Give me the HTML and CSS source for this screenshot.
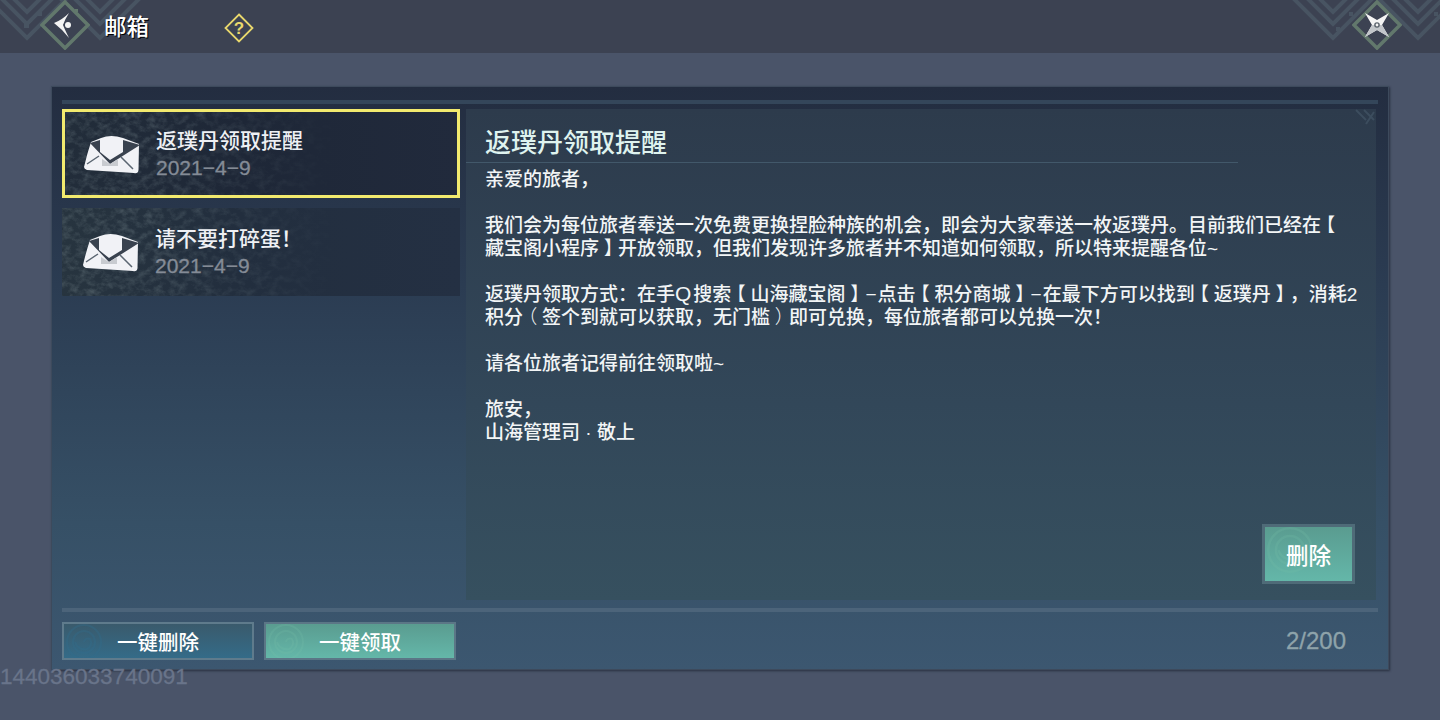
FILE: index.html
```html
<!DOCTYPE html>
<html lang="zh-CN">
	<head>
		<meta charset="utf-8" />
		<title>邮箱</title>
		<link rel="stylesheet" href="styles.css">
	</head>

	<body>
		<svg class="defs" width="0" height="0">
			<filter id="grain" x="0" y="0" width="100%" height="100%">
				<feTurbulence type="fractalNoise" baseFrequency="0.12 0.16" numOctaves="5" seed="7"/>
				<feColorMatrix values="0 0 0 0 0.55  0 0 0 0 0.68  0 0 0 0 0.68  2 0 0 0 -0.8"/>
			</filter>
			<g id="env">
				<path d="M1 33 Q4 20 8 8 L18 4 Q28 0 40 4 L56 10 L55.500 36 Q55 40 51 39 L4 36 Q1 35 1 33 Z" fill="#f1f2f6"/>
				<path d="M7 9 L17 6 L17 18 L27 26 L40 18 L40 6 L57 11 L27 30 Z" fill="#39424f"/>
				<path d="M19 25 L27 30 L35 25 L35 32 L19 32 Z" fill="#c8cbd0"/>
				<path d="M4 30 L16 22 M50 35 L38 23" stroke="#5b6672" stroke-width="1.500" fill="none"/>
			</g>
			<g id="swirl" fill="none" stroke-width="2">
				<circle cx="18" cy="18" r="17"/>
				<circle cx="18" cy="18" r="11"/>
				<path d="M18 18 a4 4 0 0 1 6 -3 a7 7 0 0 1 -3 10 a10 10 0 0 1 -12 -7"/>
			</g>
			<g id="knot-v" fill="none" stroke="#485462" stroke-width="4">
				<path d="M-40 -2 L0 38 L40 -2"/>
				<path d="M-28 -4 L0 24 L28 -4"/>
				<path d="M-18 -6 L0 12 L18 -6"/>
			</g>
		</svg>

		<header class="topbar">
			<svg class="knot knot-left" width="150" height="53" viewBox="0 0 150 53">
				<use href="#knot-v" x="27"/>
				<use href="#knot-v" x="100"/>
				<g fill="#485462">
					<rect x="24" y="23" width="5" height="5"/>
					<rect x="38" y="12" width="4" height="4"/>
				</g>
			</svg>
			<svg class="knot knot-right" width="150" height="53" viewBox="0 0 150 53">
				<use href="#knot-v" x="43"/>
				<use href="#knot-v" x="128"/>
				<g fill="#485462">
					<rect x="46" y="27" width="4" height="4"/>
					<rect x="59" y="12" width="4" height="4"/>
					<rect x="144" y="12" width="4" height="4"/>
				</g>
			</svg>

			<a class="icon-btn back-btn">
				<svg width="50" height="50" viewBox="0 0 50 50">
					<path d="M25 2 L48 25 L25 48 L2 25 Z" fill="#3c4252" stroke="#62786c" stroke-width="3.500"/>
					<path d="M29 13 Q22 20 14 23 Q22 29 29 38 Q25 30 23 25 Q25 19 29 13 Z" fill="#f4f4f4"/>
					<circle cx="28" cy="25" r="3" fill="#f4f4f4"/>
					<rect x="35" y="9" width="3" height="3" fill="#62786c"/>
				</svg>
			</a>
			<h1 class="page-title">邮箱</h1>
			<a class="icon-btn help-btn">
				<svg width="30" height="30" viewBox="0 0 30 30">
					<path d="M15 1.500 L28.500 15 L15 28.500 L1.500 15 Z" fill="none" stroke="#e9d86d" stroke-width="1.800"/>
					<text x="15" y="21" text-anchor="middle" class="help-mark">?</text>
				</svg>
			</a>
			<a class="icon-btn close-btn">
				<svg width="50" height="50" viewBox="0 0 50 50">
					<path d="M25 2 L48 25 L25 48 L2 25 Z" fill="#3c4252" stroke="#62786c" stroke-width="3.500"/>
					<path d="M13 13 L25 20 L37 13 L30 25 L37 37 L25 30 L13 37 L20 25 Z" fill="#f4f4f4"/>
					<path d="M13 37 L25 30 L37 37 L30 25 L20 25 Z" fill="#c2c6ca"/>
					<circle cx="25" cy="25" r="2.800" fill="#59616b"/>
					<circle cx="25" cy="25" r="1.400" fill="#f4f4f4"/>
				</svg>
			</a>
		</header>

		<main class="mail-panel">
			<div class="rule top-rule"></div>
			<div class="mail-body">
				<ul class="mail-list">
					<li class="mail-item selected">
						<svg class="grain" width="100%" height="100%"><rect width="100%" height="100%" filter="url(#grain)"/></svg>
						<svg class="envelope" width="58" height="42" viewBox="0 0 58 42"><use href="#env"/></svg>
						<div class="mail-meta">
							<div class="mail-title">返璞丹领取提醒</div>
							<div class="mail-date">2021−4−9</div>
						</div>
					</li>
					<li class="mail-item">
						<svg class="grain" width="100%" height="100%"><rect width="100%" height="100%" filter="url(#grain)"/></svg>
						<svg class="envelope" width="58" height="42" viewBox="0 0 58 42"><use href="#env"/></svg>
						<div class="mail-meta">
							<div class="mail-title">请不要打碎蛋！</div>
							<div class="mail-date">2021−4−9</div>
						</div>
					</li>
				</ul>

				<section class="mail-detail">
					<svg class="corner-mark" width="22" height="18" viewBox="0 0 22 18">
						<path d="M2 1 L12 11 M10 1 L20 11 M20 3 L12 15" fill="none" stroke="#3c4d5e" stroke-width="2"/>
					</svg>
					<h2 class="detail-title">返璞丹领取提醒</h2>
					<p class="detail-text">亲爱的旅者，<br>
						<br>
						我们会为每位旅者奉送一次免费更换捏脸种族的机会，即会为大家奉送一枚返璞丹。目前我们已经在<span class="bk">【</span><br>
						藏宝阁小程序<span class="bk">】</span>开放领取，但我们发现许多旅者并不知道如何领取，所以特来提醒各位~<br>
						<br>
						返璞丹领取方式：在手<span class="wide-q">Q</span>搜索<span class="bk">【</span>山海藏宝阁<span class="bk">】</span><span class="dash">−</span>点击<span class="bk">【</span>积分商城<span class="bk">】</span><span class="dash">−</span>在最下方可以找到<span class="bk">【</span>返璞丹<span class="bk">】</span>，消耗2<br>
						积分<span class="bk">（</span>签个到就可以获取，无门槛<span class="bk">）</span>即可兑换，每位旅者都可以兑换一次！<br>
						<br>
						请各位旅者记得前往领取啦~<br>
						<br>
						旅安，<br>
						山海管理司 · 敬上</p>
					<button class="btn btn-green delete-btn">
						<svg class="swirl swirl-green" width="46" height="46" viewBox="0 0 36 36"><use href="#swirl"/></svg>
						<span class="btn-label">删除</span>
					</button>
				</section>
			</div>
			<div class="rule bottom-rule"></div>
			<footer class="mail-footer">
				<button class="btn btn-blue bulk-btn">
					<svg class="swirl swirl-blue" width="36" height="36" viewBox="0 0 36 36"><use href="#swirl"/></svg>
					<span class="btn-label">一键删除</span>
				</button>
				<button class="btn btn-green bulk-btn">
					<svg class="swirl swirl-green" width="36" height="36" viewBox="0 0 36 36"><use href="#swirl"/></svg>
					<span class="btn-label">一键领取</span>
				</button>
				<span class="mail-count">2/200</span>
			</footer>
		</main>

		<div class="uid">144036033740091</div>
	</body>
</html>
```

FILE: styles.css
```css
* {
  box-sizing: border-box;
}
body {
  margin: 0;
  width: 1440px;
  height: 720px;
  overflow: hidden;
  background: #4a5469;
  color: #fff;
  font-family: "Liberation Sans", "Noto Sans CJK SC", sans-serif;
  font-weight: 500;
  text-spacing-trim: space-all;
}
.defs {
  position: absolute;
}

/* top bar */
.topbar {
  position: relative;
  display: flex;
  align-items: center;
  height: 53px;
  background: #3c4252;
  overflow: hidden;
}
.knot {
  position: absolute;
  top: 0;
}
.knot-left {
  left: 0;
}
.knot-right {
  right: 0;
}
.icon-btn {
  position: relative;
  display: flex;
}
.back-btn {
  margin: 0 0 3px 40px;
}
.page-title {
  position: relative;
  margin: 2px 0 0 14px;
  font-size: 22.500px;
  font-weight: 500;
  line-height: 30px;
  text-shadow: 1px 1px 0 #000;
}
.help-btn {
  margin: 2px 0 0 75px;
}
.help-mark {
  fill: #e9d86d;
  font-size: 17px;
  font-weight: 700;
}
.close-btn {
  margin: 0 38px 3px auto;
}

/* panel */
.mail-panel {
  display: flex;
  flex-direction: column;
  width: 1338px;
  height: 584px;
  margin: 33px 0 0 51px;
  padding: 13px 10px 9px;
  background: linear-gradient(#232d40 0%, #2a3a50 30%, #365066 75%, #3c5770 100%);
  border: 1px solid #3d4a5c;
  box-shadow: 1px 1px 2px rgba(20, 26, 38, 0.6);
}
.rule {
  flex: none;
  height: 4px;
}
.top-rule {
  background: #34465a;
}
.bottom-rule {
  background: #4c647a;
  margin-top: 8px;
}
.mail-body {
  flex: 1;
  display: flex;
  gap: 6px;
  margin-top: 5px;
  min-height: 0;
}

/* list */
.mail-list {
  flex: none;
  display: flex;
  flex-direction: column;
  gap: 10px;
  width: 398px;
  margin: 0;
  padding: 0;
  list-style: none;
}
.mail-item {
  position: relative;
  display: flex;
  align-items: center;
  height: 88px;
  padding: 0 0 0 20px;
  background: linear-gradient(90deg, #27343f, #222e3e 45%, #243043);
  overflow: hidden;
}
.mail-item.selected {
  height: 89px;
  padding-left: 18px;
  border: 3px solid #f2ea6e;
  background: linear-gradient(90deg, #222d3a, #1e2737 45%, #212a3c);
}
.grain {
  position: absolute;
  top: 0;
  left: 0;
  opacity: 0.2;
  -webkit-mask-image: linear-gradient(90deg, #000 20%, transparent 70%);
  mask-image: linear-gradient(90deg, #000 20%, transparent 70%);
}
.envelope {
  position: relative;
  flex: none;
  margin-top: 2px;
}
.mail-meta {
  position: relative;
  margin-left: 15px;
}
.mail-title {
  font-size: 21px;
  line-height: 28px;
  color: #eef0f4;
}
.mail-date {
  font-size: 21px;
  line-height: 26px;
  color: #848b96;
  -webkit-text-stroke: 0.3px #848b96;
}

/* detail */
.mail-detail {
  position: relative;
  flex: 1;
  display: flex;
  flex-direction: column;
  margin-right: 2px;
  background: linear-gradient(#2d3b4c, #324759 60%, #36505f);
}
.corner-mark {
  position: absolute;
  top: 0;
  right: 0;
}
.detail-title {
  width: 772px;
  height: 54px;
  margin: 0;
  padding: 19px 0 0 19px;
  font-size: 26px;
  font-weight: 500;
  line-height: 30px;
  color: #dff3ef;
  border-bottom: 1px solid #42586a;
}
.detail-text {
  margin: 5px 0 0;
  padding-left: 19px;
  font-size: 19px;
  line-height: 23px;
  color: #f2f5f6;
}
.wide-q {
  margin-right: 2px;
  font-size: 21px;
  line-height: 1;
}
.dash {
  margin: 0 1px;
}
/* half width glyph, padded back out to a full cell so it sits centred */
.bk {
  padding: 0 0.25em;
  font-weight: 300;
  font-feature-settings: "halt";
}
.btn {
  position: relative;
  display: block;
  padding: 0;
  font-family: inherit;
  font-weight: 500;
  color: #fff;
  cursor: pointer;
  overflow: hidden;
}
.btn-label {
  position: relative;
}
.btn-green {
  background: linear-gradient(#5a9c90, #64b7a9);
  border: 2px solid #5b7686;
}
.btn-blue {
  background: linear-gradient(#3a5a6c, #346b88);
  border: 2px solid #5f7b8c;
}
.swirl {
  position: absolute;
  top: 0;
  left: 2px;
}
.swirl-green {
  stroke: rgba(120, 190, 170, 0.22);
}
.swirl-blue {
  stroke: rgba(50, 110, 140, 0.35);
}
.delete-btn {
  flex: none;
  align-self: flex-end;
  width: 93px;
  height: 60px;
  margin: auto 21px 16px 0;
  font-size: 22.500px;
  border: 3px solid #4f6b78;
}

/* footer */
.mail-footer {
  display: flex;
  align-items: center;
  gap: 10px;
  margin-top: 10px;
}
.bulk-btn {
  width: 192px;
  height: 38px;
  font-size: 20.500px;
}
.mail-count {
  margin-left: auto;
  padding-right: 32px;
  font-size: 24px;
  color: #8ea3aa;
  -webkit-text-stroke: 0.3px #8ea3aa;
}

.uid {
  position: relative;
  margin-top: -6px;
  font-size: 22.500px;
  line-height: 26px;
  color: #69748a;
  -webkit-text-stroke: 0.3px #69748a;
}
```
